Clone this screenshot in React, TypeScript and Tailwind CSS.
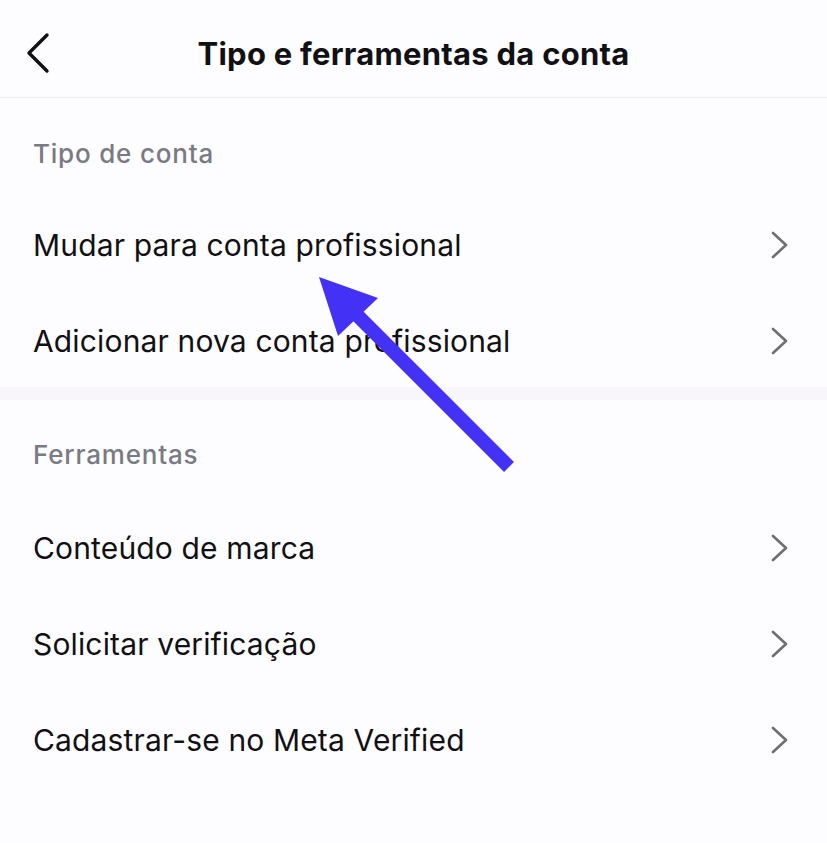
function Row({ label }: { label: string }) {
  return (
    <div className="flex h-[96px] items-center justify-between pl-[33px] pr-[36px]">
      <span className="text-[30px] tracking-[0.15px] text-[#111114] leading-none">{label}</span>
      <svg width="18" height="28" viewBox="0 0 18 28" fill="none" className="mr-[2px]">
        <path d="M2 2 L15 14 L2 26" stroke="#6e6e75" strokeWidth="2.6" strokeLinecap="round" strokeLinejoin="round" />
      </svg>
    </div>
  )
}

function SectionLabel({ children }: { children: string }) {
  return (
    <div className="flex h-[72px] items-center pl-[33px]">
      <span className="text-[26px] tracking-[0.8px] font-medium text-[#7a7a83] leading-none">{children}</span>
    </div>
  )
}

export default function App() {
  return (
    <div className="relative min-h-[843px] w-full bg-[#fdfcfe] font-['Inter',sans-serif]">
      <header className="relative flex h-[98px] items-center justify-center border-b border-[#ececee]">
        <button className="absolute left-[24px] top-[30px]">
          <svg width="30" height="46" viewBox="0 0 30 46" fill="none">
            <path d="M23 5 L5 23 L23 41" stroke="#111" strokeWidth="3.4" strokeLinecap="round" strokeLinejoin="round" />
          </svg>
        </button>
        <h1 className="mt-[10px] text-[31px] font-bold text-[#111114] tracking-[0.25px] leading-none">Tipo e ferramentas da conta</h1>
      </header>

      <section className="pt-[20px]">
        <SectionLabel>Tipo de conta</SectionLabel>
        <div className="mt-[7px]">
          <Row label="Mudar para conta profissional" />
          <Row label="Adicionar nova conta profissional" />
        </div>
      </section>

      <div className="mt-[-2px] h-[13px] bg-[#f8f6fb]" />

      <section className="pt-[19px]">
        <SectionLabel>Ferramentas</SectionLabel>
        <div className="mt-[9px]">
          <Row label="Conteúdo de marca" />
          <Row label="Solicitar verificação" />
          <Row label="Cadastrar-se no Meta Verified" />
        </div>
      </section>

      {/* annotation arrow */}
      <svg className="pointer-events-none absolute left-0 top-0" width="827" height="843" viewBox="0 0 827 843">
        <line x1="352" y1="310" x2="509" y2="467" stroke="#4332f6" strokeWidth="14" />
        <polygon points="319,277 378,298 338,336" fill="#4332f6" />
      </svg>
    </div>
  )
}
